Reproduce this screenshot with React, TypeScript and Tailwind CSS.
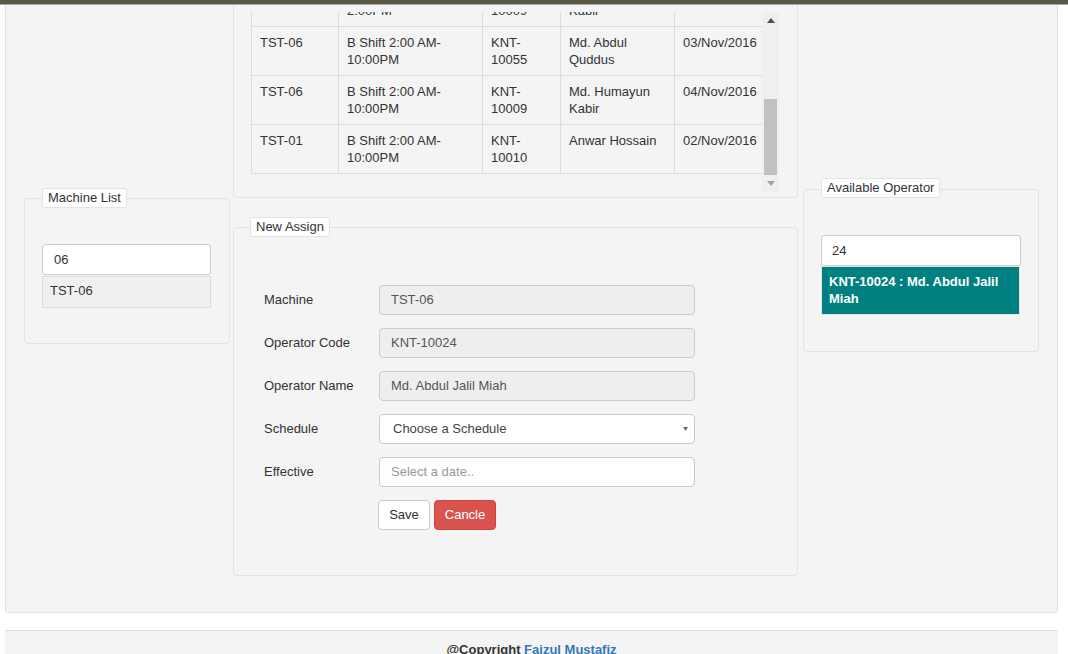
import React from 'react';

const rows = [
  { machine: 'TST-06', shift: ['A Shift 6:00 AM-', '2:00PM'], code: ['KNT-', '10009'], name: ['Md. Humayun', 'Kabir'], date: '' },
  { machine: 'TST-06', shift: ['B Shift 2:00 AM-', '10:00PM'], code: ['KNT-', '10055'], name: ['Md. Abdul', 'Quddus'], date: '03/Nov/2016' },
  { machine: 'TST-06', shift: ['B Shift 2:00 AM-', '10:00PM'], code: ['KNT-', '10009'], name: ['Md. Humayun', 'Kabir'], date: '04/Nov/2016' },
  { machine: 'TST-01', shift: ['B Shift 2:00 AM-', '10:00PM'], code: ['KNT-', '10010'], name: ['Anwar Hossain'], date: '02/Nov/2016' },
];

const formRows = [
  { label: 'Machine', value: 'TST-06' },
  { label: 'Operator Code', value: 'KNT-10024' },
  { label: 'Operator Name', value: 'Md. Abdul Jalil Miah' },
];

function Legend({ title, className }: { title: string; className: string }) {
  return (
    <div
      className={`absolute h-[20px] px-[5px] bg-white border border-[#e3e3e3] rounded-[3px] leading-[18px] text-[13px] text-[#333] ${className}`}
    >
      {title}
    </div>
  );
}

function Lines({ lines }: { lines: string[] }) {
  return (
    <>
      {lines.map((l, i) => (
        <div key={i}>{l}</div>
      ))}
    </>
  );
}

export default function App() {
  return (
    <div className="w-[1068px] h-[654px] overflow-hidden bg-white text-[13px] text-[#333]" style={{ fontFamily: '"Liberation Sans", Arial, sans-serif' }}>
      {/* top bar */}
      <div className="h-[4px] bg-[#5b5945]" />
      <div className="h-[1px] bg-[#a7a7a7]" />

      {/* main panel */}
      <div className="ml-[5px] w-[1053px] h-[608px] bg-[#f4f4f4] border-x border-b border-[#e0e0e0] rounded-b-[4px] flex items-start pl-[18px]">
        {/* Machine list */}
        <div className="relative mt-[193px] w-[206px] h-[146px] border border-[#e3e3e3] rounded-[4px]">
          <Legend title="Machine List" className="left-[17px] top-[-11px]" />
          <div className="ml-[17px] mt-[45px] w-[169px] h-[31px] bg-white border border-[#ccc] rounded-[3px] pl-[11px] leading-[29px] text-[#333]">
            06
          </div>
          <div className="ml-[17px] mt-[1px] w-[169px] h-[32px] bg-[#f0f0f0] border border-[#ddd] pl-[7px] leading-[28px] text-[#333]">
            TST-06
          </div>
        </div>

        {/* Center column */}
        <div className="ml-[3px] w-[565px] flex flex-col">
          <div className="h-[193px] border-x border-b border-[#e3e3e3] rounded-b-[4px] pl-[17px] pt-[7px]">
            <div className="flex h-[180px]">
              <div className="w-[511px] h-[180px] overflow-hidden">
                <table className="mt-[-35px] border-collapse table-fixed w-[512px] text-[13px] leading-[17px]">
                  <colgroup>
                    <col className="w-[87px]" />
                    <col className="w-[144px]" />
                    <col className="w-[78px]" />
                    <col className="w-[114px]" />
                    <col className="w-[89px]" />
                  </colgroup>
                  <tbody>
                    {rows.map((r, i) => (
                      <tr key={i} className="h-[49px] align-top">
                        <td className="border border-[#ddd] px-[8px] pt-[7px]">{r.machine}</td>
                        <td className="border border-[#ddd] px-[8px] pt-[7px]"><Lines lines={r.shift} /></td>
                        <td className="border border-[#ddd] px-[8px] pt-[7px]"><Lines lines={r.code} /></td>
                        <td className="border border-[#ddd] px-[8px] pt-[7px]"><Lines lines={r.name} /></td>
                        <td className="border border-[#ddd] px-[8px] pt-[7px] whitespace-nowrap">{r.date}</td>
                      </tr>
                    ))}
                  </tbody>
                </table>
              </div>
              {/* scrollbar */}
              <div className="w-[17px] h-[180px] bg-[#efefef] flex flex-col items-center">
                <div className="h-[17px] flex items-center justify-center">
                  <svg width="8" height="5" viewBox="0 0 8 5"><path d="M0 5 L4 0 L8 5 Z" fill="#505050" /></svg>
                </div>
                <div className="mt-[70px] w-[13px] h-[76px] bg-[#c1c1c1]" />
                <div className="h-[17px] flex items-center justify-center">
                  <svg width="8" height="5" viewBox="0 0 8 5"><path d="M0 0 L4 5 L8 0 Z" fill="#a3a3a3" /></svg>
                </div>
              </div>
            </div>
          </div>

          {/* New Assign */}
          <div className="relative mt-[29px] h-[349px] border border-[#e3e3e3] rounded-[4px]">
            <Legend title="New Assign" className="left-[16px] top-[-11px]" />
            <div className="pt-[57px] pl-[30px] flex flex-col gap-[13px]">
              {formRows.map((f) => (
                <div key={f.label} className="flex items-center">
                  <div className="w-[115px]">{f.label}</div>
                  <div className="w-[316px] h-[30px] bg-[#eee] border border-[#ccc] rounded-[4px] pl-[11px] leading-[28px] text-[#555]">
                    {f.value}
                  </div>
                </div>
              ))}
              <div className="flex items-center">
                <div className="w-[115px]">Schedule</div>
                <div className="w-[316px] h-[30px] bg-white border border-[#ccc] rounded-[4px] pl-[13px] pr-[6px] flex items-center justify-between text-[#444]">
                  <span>Choose a Schedule</span>
                  <svg width="5" height="4" viewBox="0 0 5 4"><path d="M0 0 L2.5 4 L5 0 Z" fill="#666" /></svg>
                </div>
              </div>
              <div className="flex items-center">
                <div className="w-[115px]">Effective</div>
                <div className="w-[316px] h-[30px] bg-white border border-[#ccc] rounded-[4px] pl-[11px] leading-[28px] text-[#999]">
                  Select a date..
                </div>
              </div>
              <div className="flex ml-[114px] gap-[4px]">
                <button className="w-[52px] h-[30px] bg-white border border-[#ccc] rounded-[4px] text-[#333] text-[13px]">Save</button>
                <button className="w-[62px] h-[30px] bg-[#d9534f] border border-[#d43f3a] rounded-[4px] text-white text-[13px]">Cancle</button>
              </div>
            </div>
          </div>
        </div>

        {/* Available operator */}
        <div className="relative ml-[5px] mt-[184px] w-[236px] h-[163px] border border-[#e3e3e3] rounded-[4px]">
          <Legend title="Available Operator" className="left-[17px] top-[-12px]" />
          <div className="ml-[17px] mt-[45px] w-[200px] h-[31px] bg-white border border-[#ccc] rounded-[3px] pl-[10px] leading-[29px] text-[#333]">
            24
          </div>
          <div className="ml-[17px] w-[199px] h-[49px] bg-[#008080] border border-[#e3e3e3] px-[7px] pt-[6px] leading-[17px] font-bold text-white">
            KNT-10024 : Md. Abdul Jalil Miah
          </div>
        </div>
      </div>

      {/* footer */}
      <div className="mt-[17px] ml-[5px] w-[1053px] h-[40px] bg-[#f4f4f4] border-t border-[#ddd] pt-[9px] text-center font-bold text-[13px] text-[#333]">
        @Copyright <span className="text-[#337ab7]">Faizul Mustafiz</span>
      </div>
    </div>
  );
}
